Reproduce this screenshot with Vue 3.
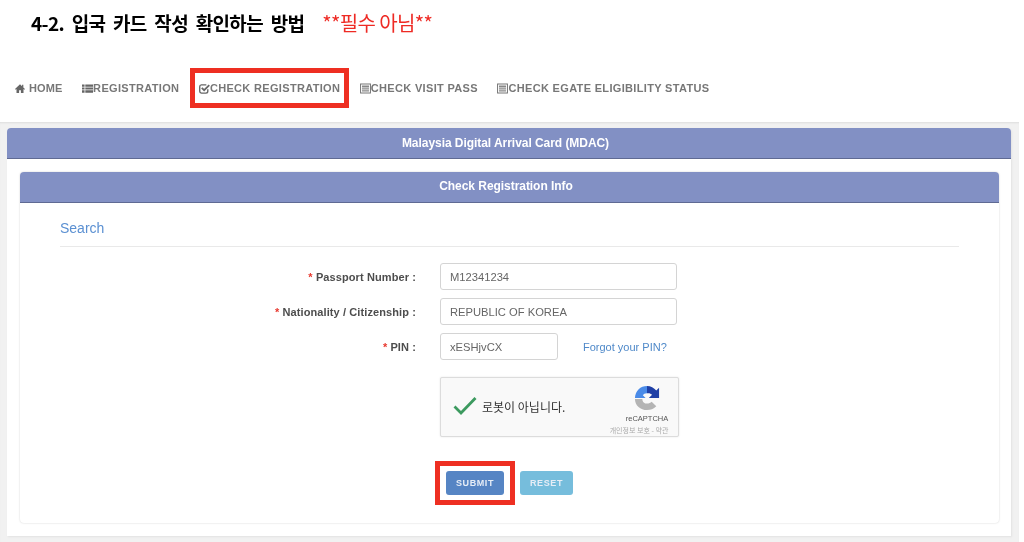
<script setup>
const navItems = [
  { label: 'HOME', icon: 'home', gap: 'wide' },
  { label: 'REGISTRATION', icon: 'list' },
  { label: 'CHECK REGISTRATION', icon: 'check', marked: true },
  { label: 'CHECK VISIT PASS', icon: 'card' },
  { label: 'CHECK EGATE ELIGIBILITY STATUS', icon: 'card' }
]
</script>

<template>
  <div class="page">
    <div class="title-row">
      <h1>4-2. 입국 카드 작성 확인하는 방법</h1>
      <span class="optional">**필수 아님**</span>
    </div>

    <nav class="nav">
      <a v-for="item in navItems" :key="item.label" class="nav-item" :class="{ marked: item.marked, 'wide-gap': item.gap }">
        <svg v-if="item.icon === 'home'" class="nav-icon" viewBox="0 0 12 12">
          <path d="M6 1 L0 6.6 L0.9 7.5 L1.8 6.7 V11.5 H4.9 V8 H7.1 V11.5 H10.2 V6.7 L11.1 7.5 L12 6.6 L10 4.7 V1.6 H8.5 V3.3 Z" fill="#666" />
        </svg>
        <svg v-else-if="item.icon === 'list'" class="nav-icon" viewBox="0 0 12 12">
          <path d="M0 1.5 H2.8 V4 H0 Z M0 4.8 H2.8 V7.2 H0 Z M0 8 H2.8 V10.5 H0 Z M3.6 1.5 H12 V4 H3.6 Z M3.6 4.8 H12 V7.2 H3.6 Z M3.6 8 H12 V10.5 H3.6 Z" fill="#666" />
        </svg>
        <svg v-else-if="item.icon === 'check'" class="nav-icon check-icon" viewBox="0 0 12 12">
          <path d="M9.6 6.8 V9 A2 2 0 0 1 7.6 11 H2.6 A2 2 0 0 1 0.8 9 V4 A2 2 0 0 1 2.6 2 H8" fill="none" stroke="#666" stroke-width="1.5" />
          <path d="M3 5.2 L5.6 7.8 L11.2 2.2" fill="none" stroke="#666" stroke-width="1.9" />
        </svg>
        <svg v-else class="nav-icon" viewBox="0 0 12 12">
          <path d="M0.6 1.1 H11.4 V10.9 H0.6 Z" fill="none" stroke="#777" stroke-width="1.1" />
          <path d="M2.2 2.6 H9.8 V4.8 H2.2 Z M2.2 5.8 H9.8 V7 H2.2 Z M2.2 8 H9.8 V9.4 H2.2 Z" fill="#888" />
        </svg>
        <span>{{ item.label }}</span>
      </a>
    </nav>

    <main class="content">
      <section class="panel outer">
        <header class="panel-head">Malaysia Digital Arrival Card (MDAC)</header>
        <div class="outer-body">
          <section class="panel inner">
            <header class="panel-head">Check Registration Info</header>
            <div class="inner-body">
              <h2 class="search-title">Search</h2>
              <form class="form" @submit.prevent>
                <label class="field-label"><i>*</i> Passport Number :</label>
                <input class="field" value="M12341234" />

                <label class="field-label"><i>*</i> Nationality / Citizenship :</label>
                <input class="field" value="REPUBLIC OF KOREA" />

                <label class="field-label"><i>*</i> PIN :</label>
                <div class="pin-row">
                  <input class="field pin" value="xESHjvCX" />
                  <a class="forgot">Forgot your PIN?</a>
                </div>

                <div class="captcha">
                  <svg class="captcha-check" viewBox="0 0 24 20">
                    <path d="M1.5 10.5 L8 17 L22.5 2" fill="none" stroke="#3c9a5f" stroke-width="2.8" />
                  </svg>
                  <span class="captcha-text">로봇이 아닙니다.</span>
                  <div class="captcha-brand">
                    <svg class="captcha-logo" viewBox="0 0 28 28">
                      <path d="M1 14 C1.5 6 7 1 14 1 V9 C11.5 9 10.5 10 9.5 11 L12.5 14 Z" fill="#4a8be8" />
                      <path d="M14 1 C18 1 21.5 3 24 6 L27 3 V14 H16 L19.5 10.5 C18 9 16 8.5 14 9 Z" fill="#1f3fa6" />
                      <path d="M1 15 H9 C9 18.5 11.5 20 14 20 C16 20 18 19 19 18 L24 23 C21 26 18 27 14 27 C7 27 1 22 1 15 Z" fill="#b4b4b4" />
                    </svg>
                    <span class="captcha-name">reCAPTCHA</span>
                    <span class="captcha-terms">개인정보 보호 - 약관</span>
                  </div>
                </div>

                <div class="buttons">
                  <span class="submit-mark">
                    <button class="btn submit" type="submit">SUBMIT</button>
                  </span>
                  <button class="btn reset" type="reset">RESET</button>
                </div>
              </form>
            </div>
          </section>
        </div>
      </section>
    </main>
  </div>
</template>

<style>
html, body {
  background: #fff;
}
</style>

<style scoped>
.page {
  width: 1024px;
  height: 542px;
  overflow: hidden;
  background: #fff;
  font-family: "Liberation Sans", Arial, sans-serif;
  filter: blur(0.45px);
}

.title-row {
  height: 45px;
  padding-left: 31px;
  display: flex;
  align-items: center;
  gap: 18px;
}

h1 {
  margin: 0;
  font-family: "Noto Sans CJK KR", sans-serif;
  font-size: 19px;
  font-weight: 700;
  letter-spacing: -0.65px;
  word-spacing: 4px;
  color: #000;
}

.optional {
  font-family: "Noto Sans CJK KR", sans-serif;
  font-size: 20px;
  letter-spacing: -0.6px;
  color: #ee2a24;
}

.nav {
  height: 77px;
  padding: 9px 0 0 15px;
  display: flex;
  align-items: center;
  gap: 19.5px;
  box-sizing: border-box;
}

.nav-item {
  position: relative;
  display: flex;
  align-items: center;
  gap: 0;
  font-size: 11px;
  font-weight: 700;
  letter-spacing: 0.33px;
  color: #777;
}

.nav-item.wide-gap {
  gap: 4px;
  letter-spacing: 0.15px;
}

.nav-item.marked::after {
  content: "";
  position: absolute;
  left: -9px;
  top: 50%;
  margin-top: -20px;
  width: 159px;
  height: 40px;
  box-sizing: border-box;
  border: 5px solid #ee2f22;
}

.nav-icon {
  width: 11px;
  height: 11px;
  flex: none;
}

.wide-gap .nav-icon {
  width: 10px;
}

.content {
  height: 420px;
  margin-right: 5px;
  padding: 6px 8px 6px 7px;
  box-sizing: border-box;
  background: #f1f1f1;
  box-shadow: inset 0 2px 2px -1px #ddd;
}

.panel {
  background: #fff;
  border-radius: 4px 4px 0 0;
}

.outer {
  height: 408px;
  box-shadow: 1px 1px 2px #e2e2e2;
}

.panel-head {
  height: 31px;
  padding-right: 7px;
  display: flex;
  align-items: center;
  justify-content: center;
  background: #8290c4;
  border-bottom: 1px solid #5f6a93;
  border-radius: 4px 4px 0 0;
  box-sizing: border-box;
  font-size: 12px;
  font-weight: 700;
  letter-spacing: -0.05px;
  color: #fff;
}

.outer-body {
  padding: 13px 12px 0 13px;
}

.inner {
  height: 351px;
  border-radius: 4px;
  box-shadow: 0 0 2px #cfcfcf;
}

.inner .panel-head {
  padding-bottom: 2px;
}

.inner-body {
  padding: 0 40px;
}

.search-title {
  margin: 0;
  height: 44px;
  line-height: 50px;
  box-sizing: border-box;
  border-bottom: 1px solid #e9e9e9;
  font-size: 14px;
  font-weight: 400;
  color: #5b90d2;
}

.form {
  margin-top: 16px;
  display: grid;
  grid-template-columns: 356px 1fr;
  column-gap: 24px;
  row-gap: 8px;
  align-items: center;
}

.field-label {
  text-align: right;
  font-size: 11px;
  font-weight: 700;
  letter-spacing: 0.1px;
  color: #4d4d4d;
}

.field-label i {
  font-style: normal;
  color: #e8392f;
}

.field {
  width: 237px;
  height: 27px;
  padding: 0 9px;
  box-sizing: border-box;
  border: 1px solid #d4d4d4;
  border-radius: 3px;
  background: #fff;
  font-family: "Liberation Sans", Arial, sans-serif;
  font-size: 11.2px;
  color: #666;
  outline: none;
}

.pin-row {
  display: flex;
  align-items: center;
  gap: 25px;
}

.field.pin {
  width: 118px;
}

.forgot {
  font-size: 11px;
  color: #4f89c9;
}

.captcha {
  grid-column: 2;
  width: 239px;
  height: 60px;
  margin-top: 9px;
  padding-left: 12px;
  box-sizing: border-box;
  display: flex;
  align-items: center;
  background: #f9f9f9;
  border: 1px solid #dcdcdc;
  border-radius: 2px;
  box-shadow: 0 0 2px #e4e4e4;
}

.captcha-check {
  width: 24px;
  height: 20px;
  flex: none;
  margin-bottom: 2px;
}

.captcha-text {
  margin-left: 5px;
  padding-bottom: 2px;
  font-family: "Noto Sans CJK KR", sans-serif;
  font-size: 12px;
  color: #333;
}

.captcha-brand {
  margin-left: auto;
  width: 60px;
  display: flex;
  flex-direction: column;
  align-items: center;
  padding: 4px 1px 0 0;
}

.captcha-logo {
  width: 26px;
  height: 26px;
}

.captcha-name {
  margin-top: 3px;
  font-size: 7.5px;
  line-height: 9px;
  color: #555;
}

.captcha-terms {
  margin: 3px 16px 0 0;
  font-family: "Noto Sans CJK KR", sans-serif;
  font-size: 7px;
  line-height: 8px;
  white-space: nowrap;
  color: #aaa;
}

.buttons {
  grid-column: 1 / -1;
  margin-top: 26px;
  padding-left: 386px;
  display: flex;
  gap: 16px;
}

.submit-mark {
  position: relative;
  display: flex;
}

.submit-mark::after {
  content: "";
  position: absolute;
  left: -11px;
  top: -10px;
  width: 80px;
  height: 44px;
  box-sizing: border-box;
  border: 5px solid #ee2f22;
}

.btn {
  height: 24px;
  padding-bottom: 1px;
  border: 0;
  border-radius: 3px;
  font-family: "Liberation Sans", Arial, sans-serif;
  font-size: 9px;
  font-weight: 700;
  letter-spacing: 0.6px;
  color: #e6edf6;
}

.submit {
  width: 58px;
  background: #5685c4;
}

.reset {
  width: 53px;
  background: #76bddc;
}
</style>
